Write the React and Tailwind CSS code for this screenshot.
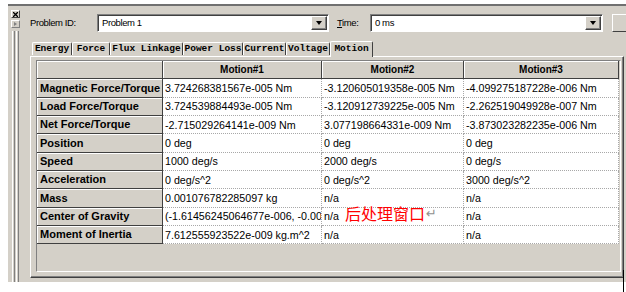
import React from 'react';

const rows = [
  ['Magnetic Force/Torque', '3.724268381567e-005 Nm', '-3.120605019358e-005 Nm', '-4.099275187228e-006 Nm'],
  ['Load Force/Torque', '3.724539884493e-005 Nm', '-3.120912739225e-005 Nm', '-2.262519049928e-007 Nm'],
  ['Net Force/Torque', '-2.715029264141e-009 Nm', '3.077198664331e-009 Nm', '-3.873023282235e-006 Nm'],
  ['Position', '0 deg', '0 deg', '0 deg'],
  ['Speed', '1000 deg/s', '2000 deg/s', '0 deg/s'],
  ['Acceleration', '0 deg/s^2', '0 deg/s^2', '3000 deg/s^2'],
  ['Mass', '0.001076782285097 kg', 'n/a', 'n/a'],
  ['Center of Gravity', '(-1.61456245064677e-006, -0.001638012, 0)', 'n/a', 'n/a'],
  ['Moment of Inertia', '7.612555923522e-009 kg.m^2', 'n/a', 'n/a'],
];

const tabs = [
  { label: 'Energy', w: 'w-[40px]' },
  { label: 'Force', w: 'w-[38px]' },
  { label: 'Flux Linkage', w: 'w-[73px]' },
  { label: 'Power Loss', w: 'w-[60px]' },
  { label: 'Current', w: 'w-[43px]' },
  { label: 'Voltage', w: 'w-[44px]' },
];

function DropArrow() {
  return (
    <div className="w-[16px] h-full bg-[#d4d0c8] border border-white border-r-[#404040] border-b-[#404040] shadow-[inset_-1px_-1px_0_#808080] flex items-center justify-center">
      <div className="w-0 h-0 border-x-[3.5px] border-x-transparent border-t-[4px] border-t-black" />
    </div>
  );
}

function Combo({ value, className }) {
  return (
    <div className={`shrink-0 h-[18px] bg-white border border-[#808080] border-r-white border-b-white shadow-[inset_1px_1px_0_#404040] flex items-stretch p-[1px] pl-[2px] ${className}`}>
      <div className="flex-1 flex items-center pl-[2px] text-[9.5px] tracking-[-0.4px] text-black">{value}</div>
      <DropArrow />
    </div>
  );
}

export default function App() {
  return (
    <div className="relative w-[626px] h-[292px] bg-white overflow-hidden" style={{ fontFamily: '"Liberation Sans", Arial, sans-serif' }}>
      <div className="ml-[8px] mt-[4px] w-[618px] h-[278px] bg-[#d4d0c8] border-t-2 border-[#707070] flex">
        {/* left strip */}
        <div className="w-[14px] shrink-0 flex flex-col items-center">
          <div className="mt-[4px] w-[9px] h-[8px] bg-[#d4d0c8] border border-white border-r-[#404040] border-b-[#404040] flex items-center justify-center">
            <svg width="5" height="5" viewBox="0 0 5 5">
              <path d="M0 0L5 5M5 0L0 5" stroke="#000" strokeWidth="1.3" />
            </svg>
          </div>
          <div className="mt-[2px] w-[9px] h-[8px] bg-[#d4d0c8] border border-white border-r-[#808080] border-b-[#808080] flex items-center justify-center">
            <div className="w-0 h-0 border-y-[2px] border-y-transparent border-l-[3px] border-l-[#808080]" />
          </div>
          <div className="mt-[3px] flex-1 flex gap-[1px]">
            <div className="w-[3px] border-l border-white border-r border-r-[#808080]" />
            <div className="w-[3px] border-l border-white border-r border-r-[#808080]" />
          </div>
        </div>

        {/* main */}
        <div className="flex-1 min-w-0 overflow-hidden flex flex-col">
          <div className="mt-[8px] flex items-center pl-[8px] text-[9.5px] tracking-[-0.4px] text-black">
            <div className="w-[67px] shrink-0">Problem ID:</div>
            <Combo value="Problem 1" className="w-[232px]" />
            <div className="ml-[8px] w-[33px] shrink-0"><span className="underline">T</span>ime:</div>
            <Combo value="0 ms" className="w-[233px]" />
            <div className="ml-[9px] shrink-0 w-[20px] h-[18px] border border-white border-r-[#404040] border-b-[#404040]" />
          </div>

          {/* tabs */}
          <div className="mt-[8px] ml-[10px] flex items-end h-[16px] relative z-10" style={{ fontFamily: '"Liberation Mono", monospace' }}>
            {tabs.map((t) => (
              <div key={t.label} className={`${t.w} shrink-0 h-[13px] mb-px flex items-center justify-center border-l border-t border-white border-r border-r-[#404040] rounded-t-[2px] text-[9.5px] font-bold text-black`}>
                {t.label}
              </div>
            ))}
            <div className="w-[43px] shrink-0 h-[16px] bg-[#d4d0c8] flex items-center justify-center border-l border-t border-white border-r border-r-[#404040] rounded-t-[2px] text-[9.5px] font-bold text-black -mb-px">
              Motion
            </div>
          </div>

          {/* panel */}
          <div className="ml-[8px] w-[594px] shrink-0 h-[222px] border-l border-t border-white border-r border-b border-r-[#404040] border-b-[#404040] shadow-[inset_-1px_-1px_0_#808080] pl-[5px] pt-[3px] pr-[2px] pb-[5px]">
            <div className="h-full border border-[#808080] border-r-white border-b-white bg-[#d4d0c8]">
              <div className="grid grid-cols-[126px_159px_142px_155px] auto-rows-[18.33px] text-black">
                <div className="bg-[#d4d0c8] border-r border-b border-[#404040] shadow-[inset_1px_1px_0_#fff]" />
                {['Motion#1', 'Motion#2', 'Motion#3'].map((h) => (
                  <div key={h} className="bg-[#d4d0c8] border-r border-b border-[#404040] shadow-[inset_1px_1px_0_#fff] flex items-center justify-center text-[10px] font-bold">
                    {h}
                  </div>
                ))}
                {rows.map((r) => (
                  <React.Fragment key={r[0]}>
                    <div className="bg-[#d4d0c8] border-r border-b border-[#404040] shadow-[inset_1px_1px_0_#fff] flex items-center pl-[3px] text-[11px] font-bold whitespace-nowrap overflow-hidden">
                      {r[0]}
                    </div>
                    {r.slice(1).map((v, i) => (
                      <div key={i} className="bg-white border-r border-b border-dotted border-[#a8a8a8] flex items-center pl-[2px] text-[10.7px] whitespace-nowrap overflow-hidden">
                        {v}
                      </div>
                    ))}
                  </React.Fragment>
                ))}
              </div>
            </div>
          </div>
        </div>
      </div>

      <div className="absolute w-px h-[22px] bg-black left-[623px] top-[270px]" />

      <div className="absolute left-[345px] top-[205px] flex items-center leading-none">
        <span className="text-[16px] text-[#ff0000]" style={{ fontFamily: '"Noto Sans CJK SC", sans-serif' }}>后处理窗口</span>
        <span className="text-[13px] text-[#909090] ml-[1px]" style={{ fontFamily: '"DejaVu Sans", sans-serif' }}>↵</span>
      </div>
    </div>
  );
}
